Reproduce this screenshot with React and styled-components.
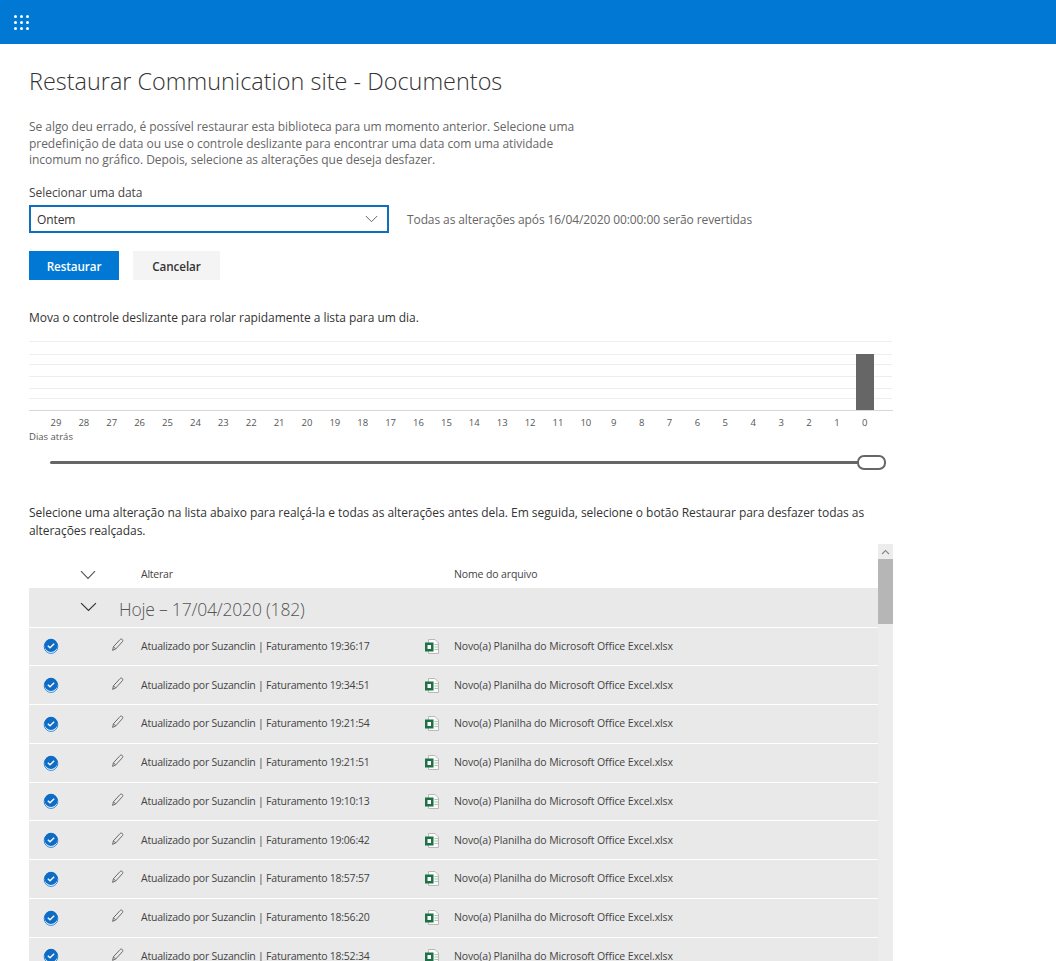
import React from 'react';
import styled, { createGlobalStyle } from 'styled-components';

const rows = ['19:36:17', '19:34:51', '19:21:54', '19:21:51', '19:10:13', '19:06:42', '18:57:57', '18:56:20', '18:52:34'];
const days = Array.from({ length: 30 }, (_, i) => 29 - i);
const gridLines = [341, 354, 364, 376, 388, 398];

const App = () => {
    return (
        <Page>
            <GlobalStyle />
            <TopBar>
                <Waffle>
                    {Array.from({ length: 9 }, (_, i) => <span key={i} />)}
                </Waffle>
            </TopBar>
            <Main>
                <Title>Restaurar Communication site - Documentos</Title>
                <Intro>
                    Se algo deu errado, é possível restaurar esta biblioteca para um momento anterior. Selecione uma
                    predefinição de data ou use o controle deslizante para encontrar uma data com uma atividade
                    incomum no gráfico. Depois, selecione as alterações que deseja desfazer.
                </Intro>
                <FieldLabel>Selecionar uma data</FieldLabel>
                <DateRow>
                    <Select>
                        Ontem
                        <Chevron width="13" height="8" color="#555" />
                    </Select>
                    <DateHint>Todas as alterações após 16/04/2020 00:00:00 serão revertidas</DateHint>
                </DateRow>
                <Buttons>
                    <Button $primary>Restaurar</Button>
                    <Button>Cancelar</Button>
                </Buttons>
                <SliderHint>Mova o controle deslizante para rolar rapidamente a lista para um dia.</SliderHint>
                <Chart width="864" height="70" viewBox="29 341 864 70">
                    {gridLines.map((y) => <line key={y} x1="29" x2="892" y1={y + 0.5} y2={y + 0.5} stroke="#eeeeee" />)}
                    <line x1="29" x2="893" y1="410.5" y2="410.5" stroke="#d3d8de" />
                    <rect x="856" y="354" width="18" height="56" fill="#666666" />
                </Chart>
                <DayLabels>
                    {days.map((d) => <DayLabel key={d}>{d}</DayLabel>)}
                </DayLabels>
                <DaysAgo>Dias atrás</DaysAgo>
                <Slider>
                    <Track />
                    <Thumb />
                </Slider>
                <ListHint>
                    Selecione uma alteração na lista abaixo para realçá-la e todas as alterações antes dela. Em seguida, selecione o botão Restaurar para desfazer todas as alterações realçadas.
                </ListHint>
                <ListArea>
                    <List>
                        <HeaderRow>
                            <CheckCell />
                            <ToggleCell><Chevron width="16" height="10" color="#555" /></ToggleCell>
                            <ChangeCell>Alterar</ChangeCell>
                            <FileCell />
                            <NameCell>Nome do arquivo</NameCell>
                        </HeaderRow>
                        <GroupRow>
                            <CheckCell />
                            <ToggleCell $narrow><Chevron width="17" height="10" color="#333" /></ToggleCell>
                            <GroupTitle>Hoje – 17/04/2020 (182)</GroupTitle>
                        </GroupRow>
                        {rows.map((time) => (
                            <Row key={time}>
                                <CheckCell><CheckIcon /></CheckCell>
                                <PencilCell><PencilIcon /></PencilCell>
                                <ChangeCell>Atualizado por Suzanclin | Faturamento {time}</ChangeCell>
                                <FileCell><ExcelIcon /></FileCell>
                                <NameCell>Novo(a) Planilha do Microsoft Office Excel.xlsx</NameCell>
                            </Row>
                        ))}
                    </List>
                    <ScrollBar>
                        <ScrollUp>
                            <svg width="9" height="6" viewBox="0 0 9 6" fill="none">
                                <path d="M1 5L4.5 1.5L8 5" stroke="#8a8a8a" strokeWidth="1.2" />
                            </svg>
                        </ScrollUp>
                        <ScrollThumb />
                    </ScrollBar>
                </ListArea>
            </Main>
        </Page>
    );
}

export default App;

const Chevron = ({ width, height, color }) => (
    <svg width={width} height={height} viewBox="0 0 16 10" fill="none" preserveAspectRatio="none">
        <path d="M1 1.2L8 8.4L15 1.2" stroke={color} strokeWidth="1.1" />
    </svg>
)

const CheckIcon = () => (
    <svg width="16" height="16" viewBox="0 0 16 16">
        <circle cx="8" cy="8.6" r="6.8" fill="#fff" stroke="#2a86d8" strokeWidth="1" />
        <circle cx="8" cy="7.4" r="6.6" fill="#0f6cc4" />
        <path d="M4.8 7.8L7 9.8L11.2 5.8" fill="none" stroke="#fff" strokeWidth="1.4" />
    </svg>
)

const PencilIcon = () => (
    <svg width="13" height="14" viewBox="0 0 13 14" fill="none">
        <path d="M1.6 12.4L2.4 8.8L9 1.6C9.7 0.9 10.6 0.9 11.3 1.5C12 2.2 12 3 11.4 3.7L4.8 10.9L1.6 12.4Z" stroke="#6a6a6a" strokeWidth="1" />
        <path d="M2.4 8.8L4.8 10.9" stroke="#6a6a6a" strokeWidth="1" />
    </svg>
)

const ExcelIcon = () => (
    <svg width="14" height="15" viewBox="0 0 14 15">
        <path d="M3.5 0.5H10L13.5 4V14.5H3.5Z" fill="#fafafa" stroke="#b9b9b9" />
        <path d="M9.5 5.5H13M9.5 8H13M9.5 10.5H13" stroke="#a9c9b4" />
        <rect x="0" y="3.5" width="8.5" height="9" fill="#1e7145" />
        <rect x="2.5" y="6" width="3.5" height="4" fill="#fff" />
    </svg>
)

const GlobalStyle = createGlobalStyle`
html, body {
    margin:0;
    padding:0;
    background:#fff;
}
body {
    font-family:"Open Sans","Noto Sans",sans-serif;
    color:#333;
}
`

const Page = styled.div`
height:961px;
overflow:hidden;
`
const TopBar = styled.div`
height:44px;
background:#0078d4;
display:flex;
align-items:center;
padding-left:14px;
`
const Waffle = styled.div`
display:grid;
grid-template-columns:repeat(3,3px);
grid-auto-rows:3px;
gap:3px;
span {
    background:#fff;
    border-radius:50%;
}
`
const Main = styled.div`
padding:0 0 0 29px;
width:864px;
`
const Title = styled.h1`
margin:20px 0 0;
font-size:23.4px;
line-height:34px;
font-weight:300;
letter-spacing:.02px;
color:#333;
white-space:nowrap;
`
const Intro = styled.p`
margin:21px 0 0;
width:552px;
font-size:12px;
line-height:16.7px;
letter-spacing:-.05px;
color:#666;
`
const FieldLabel = styled.div`
margin-top:15px;
font-size:12px;
line-height:17px;
letter-spacing:-.05px;
color:#444;
`
const DateRow = styled.div`
display:flex;
align-items:center;
margin-top:4px;
`
const Select = styled.div`
box-sizing:border-box;
width:360px;
height:28px;
border:2px solid #106ebe;
padding:0 9px 0 6px;
display:flex;
align-items:center;
justify-content:space-between;
font-size:12px;
letter-spacing:-.1px;
color:#333;
`
const DateHint = styled.div`
margin-left:18px;
font-size:12px;
letter-spacing:-.1px;
color:#666;
`
const Buttons = styled.div`
display:flex;
gap:14px;
margin-top:18px;
`
const Button = styled.button`
border:none;
height:29px;
width:${(p) => (p.$primary ? '90px' : '87px')};
background:${(p) => (p.$primary ? '#0078d4' : '#f4f4f4')};
color:${(p) => (p.$primary ? '#fff' : '#333')};
font-family:inherit;
font-size:11.7px;
font-weight:600;
letter-spacing:-.1px;
padding:0;
`
const SliderHint = styled.div`
margin-top:29px;
font-size:12px;
line-height:17px;
letter-spacing:-.05px;
color:#333;
`
const Chart = styled.svg`
display:block;
margin-top:15px;
`
const DayLabels = styled.div`
display:flex;
margin:5px 0 0 13px;
`
const DayLabel = styled.span`
flex:0 0 27.9px;
text-align:center;
font-size:9.5px;
line-height:14px;
color:#555;
`
const DaysAgo = styled.div`
font-size:9.5px;
line-height:14px;
color:#555;
`
const Slider = styled.div`
position:relative;
height:16px;
margin:10px 0 0 21px;
width:836px;
display:flex;
align-items:center;
`
const Track = styled.div`
flex:1;
height:3px;
background:#666;
border-radius:2px;
`
const Thumb = styled.div`
box-sizing:border-box;
position:absolute;
right:0;
top:1px;
width:29px;
height:15px;
background:#fff;
border:2px solid #666;
border-radius:7px;
`
const ListHint = styled.p`
margin:34px 0 0;
width:850px;
font-size:12px;
line-height:18px;
letter-spacing:-.05px;
color:#333;
`
const ListArea = styled.div`
display:flex;
margin-top:4px;
height:500px;
`
const List = styled.div`
flex:1;
min-width:0;
`
const ScrollBar = styled.div`
flex:0 0 15px;
background:#ececec;
`
const ScrollUp = styled.div`
height:15px;
display:flex;
align-items:center;
justify-content:center;
`
const ScrollThumb = styled.div`
height:65px;
background:#b6b6b6;
`
const rowBase = `
display:flex;
align-items:center;
box-sizing:border-box;
`
const HeaderRow = styled.div`
${rowBase}
height:44px;
padding-top:17px;
font-size:10.5px;
color:#444;
`
const GroupRow = styled.div`
${rowBase}
height:39.5px;
background:#e9e9e9;
border-bottom:1px solid #fff;
`
const Row = styled.div`
${rowBase}
height:38.75px;
background:#e9e9e9;
border-bottom:1px solid #fff;
font-size:10.5px;
color:#444;
`
const CheckCell = styled.div`
flex:0 0 43px;
box-sizing:border-box;
padding-left:14px;
display:flex;
`
const ToggleCell = styled.div`
flex:0 0 ${(p) => (p.$narrow ? '47px' : '69px')};
display:flex;
align-items:center;
padding-left:8px;
box-sizing:border-box;
`
const PencilCell = styled.div`
flex:0 0 69px;
box-sizing:border-box;
padding:0 0 3px 39px;
display:flex;
`
const ChangeCell = styled.div`
flex:0 0 282px;
margin-top:-1px;
letter-spacing:-.23px;
white-space:nowrap;
`
const FileCell = styled.div`
flex:0 0 31px;
box-sizing:border-box;
padding-left:2px;
display:flex;
`
const NameCell = styled.div`
margin-top:-1px;
letter-spacing:-.12px;
white-space:nowrap;
`
const GroupTitle = styled.div`
font-size:17.5px;
font-weight:300;
color:#555;
letter-spacing:-.2px;
padding-top:3px;
`
